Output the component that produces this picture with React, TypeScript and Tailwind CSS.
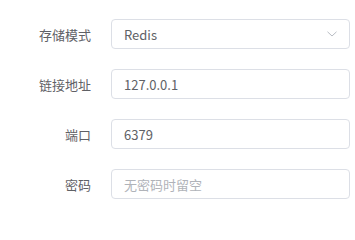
import React from "react";

const font = { fontFamily: '"Noto Sans CJK SC", "Noto Sans", sans-serif' };

function Row({ label, children, first }: { label: string; children: React.ReactNode; first?: boolean }) {
  return (
    <div className={`flex items-center h-[30px] ${first ? "" : "mt-[20px]"}`}>
      <div className="w-[91px] shrink-0 text-right text-[13px] text-[#5f6166] leading-none">{label}</div>
      <div className="ml-[20px] w-[239px] h-[30px]">{children}</div>
    </div>
  );
}

function Box({ children }: { children: React.ReactNode }) {
  return (
    <div className="flex items-center h-full w-full border border-[#dcdfe6] rounded-[4px] pl-[12px] pr-[12px] bg-white text-[13px] leading-none">
      {children}
    </div>
  );
}

export default function App() {
  return (
    <div className="w-[355px] h-[203px] bg-white pt-[19px]" style={font}>
      <Row label="存储模式" first>
        <Box>
          <span className="flex-1 text-[#606266]">Redis</span>
          <svg width="10" height="6" viewBox="0 0 10 6">
            <path d="M0.5 0.8 L5 5 L9.5 0.8" fill="none" stroke="#b8bcc4" strokeWidth="1" />
          </svg>
        </Box>
      </Row>
      <Row label="链接地址">
        <Box>
          <span className="text-[#606266]">127.0.0.1</span>
        </Box>
      </Row>
      <Row label="端口">
        <Box>
          <span className="text-[#606266]">6379</span>
        </Box>
      </Row>
      <Row label="密码">
        <Box>
          <span className="text-[#b0b3b9]">无密码时留空</span>
        </Box>
      </Row>
    </div>
  );
}
